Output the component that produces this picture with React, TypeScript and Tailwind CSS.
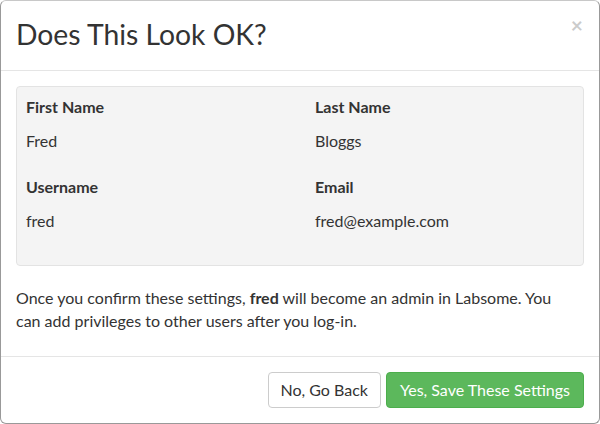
import React from 'react';

const fields = [
  { label: 'First Name', value: 'Fred' },
  { label: 'Last Name', value: 'Bloggs' },
  { label: 'Username', value: 'fred' },
  { label: 'Email', value: 'fred@example.com' },
];

export default function App() {
  return (
    <div className="w-[600px] h-[424px] bg-white text-[#333] font-['Lato','Open_Sans',sans-serif]">
      <div className="h-full flex flex-col border border-[#999] border-t-[#c8c8c8] rounded-[6px] overflow-hidden">
        {/* Header */}
        <div className="h-[70px] flex items-center justify-between pl-[15px] pr-[16px] border-b border-[#e5e5e5]">
          <h4 className="text-[28.3px] leading-none text-[#333] -mt-[2px]">Does This Look OK?</h4>
          <button className="self-start mt-[13px] text-[21px] font-bold leading-none text-black opacity-20">
            ×
          </button>
        </div>

        {/* Body */}
        <div className="px-[15px] pt-[15px]">
          <div className="h-[180px] bg-[#f4f4f4] border border-[#e3e3e3] rounded-[4px] pl-[9px] pt-[8px]">
            <div className="grid grid-cols-[289px_1fr] gap-y-[23px]">
              {fields.map((f) => (
                <div key={f.label} className="text-[16px] leading-[23px]">
                  <div className="font-bold">{f.label}</div>
                  <div className="mt-[11px]">{f.value}</div>
                </div>
              ))}
            </div>
          </div>
          <p className="mt-[20px] max-w-[550px] text-[16px] leading-[23px]">
            Once you confirm these settings, <b>fred</b> will become an admin in Labsome. You can add
            privileges to other users after you log-in.
          </p>
        </div>

        {/* Footer */}
        <div className="mt-auto h-[67px] border-t border-[#e5e5e5] flex items-center justify-end gap-[5px] pr-[15px]">
          <button className="h-[36px] px-[12px] text-[16px] border border-[#ccc] rounded-[4px] bg-white text-[#333]">
            No, Go Back
          </button>
          <button className="h-[36px] px-[13px] text-[16px] border border-[#4cae4c] rounded-[4px] bg-[#5cb85c] text-white">
            Yes, Save These Settings
          </button>
        </div>
      </div>
    </div>
  );
}
